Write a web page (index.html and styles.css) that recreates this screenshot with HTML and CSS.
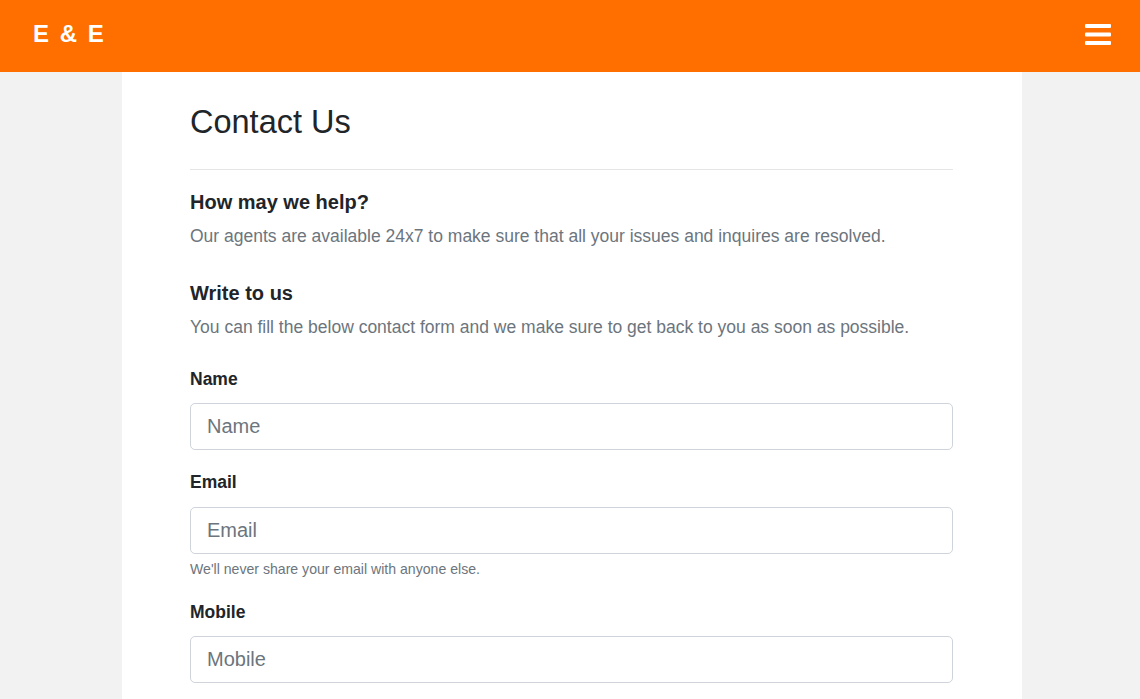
FILE: index.html
```html
<!DOCTYPE html>
<html lang="en">
<head>
<meta charset="utf-8">
<title>Contact Us - E &amp; E</title>
<link rel="stylesheet" href="styles.css">
</head>
<body>
<header class="topbar">
  <a class="brand" href="#">E &amp; E</a>
  <button class="menu-btn" aria-label="Menu">
    <svg width="26" height="21" viewBox="0 0 26 21" aria-hidden="true">
      <rect x="0" y="0" width="26" height="4" rx="1" fill="#fff"/>
      <rect x="0" y="8.5" width="26" height="4" rx="1" fill="#fff"/>
      <rect x="0" y="17" width="26" height="4" rx="1" fill="#fff"/>
    </svg>
  </button>
</header>
<main class="page">
  <h1 class="title">Contact Us</h1>
  <hr class="rule">
  <section class="block">
    <h2 class="subtitle">How may we help?</h2>
    <p class="lead">Our agents are available 24x7 to make sure that all your issues and inquires are resolved.</p>
  </section>
  <section class="block">
    <h2 class="subtitle">Write to us</h2>
    <p class="lead">You can fill the below contact form and we make sure to get back to you as soon as possible.</p>
  </section>
  <form class="form">
    <div class="field">
      <label class="label" for="name">Name</label>
      <input class="input" id="name" type="text" placeholder="Name">
    </div>
    <div class="field">
      <label class="label" for="email">Email</label>
      <input class="input" id="email" type="email" placeholder="Email">
      <small class="hint">We'll never share your email with anyone else.</small>
    </div>
    <div class="field">
      <label class="label" for="mobile">Mobile</label>
      <input class="input" id="mobile" type="tel" placeholder="Mobile">
    </div>
    <div class="field">
      <label class="label" for="msg">Message</label>
      <textarea class="input textarea" id="msg" rows="5" placeholder="Message"></textarea>
    </div>
    <button class="submit" type="button">Submit</button>
  </form>
</main>
</body>
</html>
```
FILE: styles.css
```css
html {
  scrollbar-width: none;
}
html::-webkit-scrollbar {
  display: none;
}
* {
  box-sizing: border-box;
}
body {
  margin: 0;
  background: #f2f2f2;
  font-family: "Liberation Sans", Arial, sans-serif;
  font-size: 17.5px;
  line-height: 1.5;
  color: #212529;
}
.topbar {
  height: 72px;
  background: #ff6f00;
  display: flex;
  align-items: center;
  justify-content: space-between;
  padding: 0 29px 0 33px;
}
.brand {
  color: #fff;
  text-decoration: none;
  font-weight: 700;
  font-size: 24px;
  letter-spacing: 2px;
  line-height: 1;
  margin-top: -4px;
}
.menu-btn {
  background: none;
  border: 0;
  padding: 0;
  display: flex;
  margin-top: -3px;
  cursor: pointer;
}
.page {
  width: 900px;
  margin-left: calc(50% - 448px);
  background: #fff;
  padding: 31px 69px 60px 68px;
  min-height: 1140px;
}
.title {
  margin: 0;
  font-size: 32.5px;
  font-weight: 400;
  line-height: 39px;
}
.rule {
  margin: 27px 0 20px;
  border: 0;
  border-top: 1px solid #e5e5e5;
}
.block {
  margin-bottom: 32px;
}
.block:last-of-type {
  margin-bottom: 25px;
}
.subtitle {
  margin: 0 0 9px;
  font-size: 20px;
  font-weight: 700;
  line-height: 24px;
}
.lead {
  margin: 0;
  color: #6c757d;
  line-height: 26.4px;
}
.form {
  display: flex;
  flex-direction: column;
  gap: 19px;
}
.field {
  display: flex;
  flex-direction: column;
}
.label {
  font-weight: 700;
  line-height: 26.4px;
  margin-bottom: 11px;
}
.input {
  height: 47px;
  padding: 8px 16px;
  font-family: inherit;
  font-size: 20px;
  color: #495057;
  border: 1px solid #ced4da;
  border-radius: 5px;
  background: #fff;
}
.input::placeholder {
  color: #6c757d;
}
.textarea {
  height: auto;
  resize: vertical;
}
.hint {
  margin-top: 5px;
  font-size: 14.1px;
  line-height: 21px;
  color: #6c757d;
}
.submit {
  align-self: flex-start;
  background: #ff6f00;
  color: #fff;
  border: 0;
  border-radius: 5px;
  padding: 10px 24px;
  font-family: inherit;
  font-size: 18px;
}
```
